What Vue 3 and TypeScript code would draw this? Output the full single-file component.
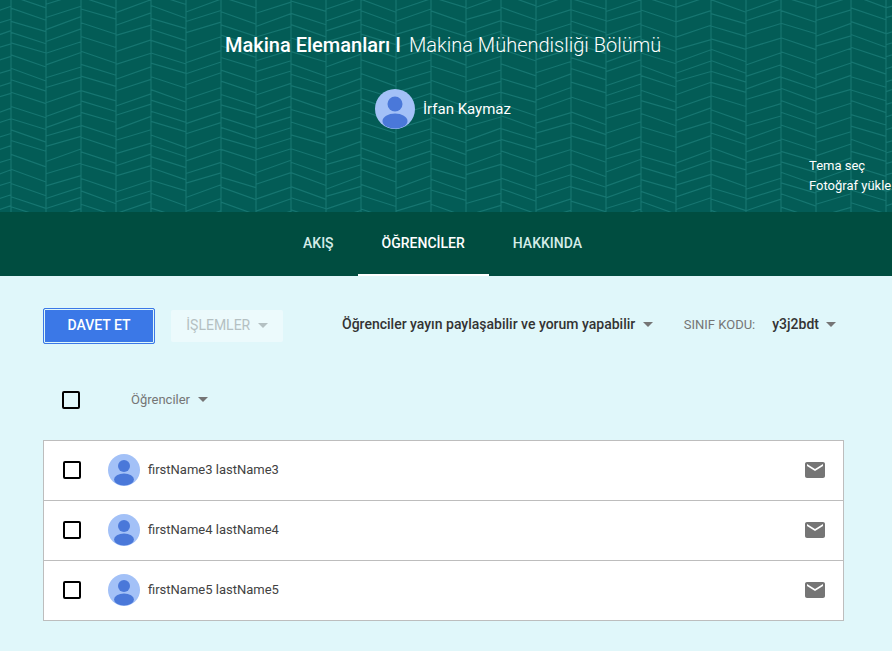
<script setup lang="ts">
interface Student {
  id: number;
  name: string;
}

const students: Student[] = [
  { id: 3, name: 'firstName3 lastName3' },
  { id: 4, name: 'firstName4 lastName4' },
  { id: 5, name: 'firstName5 lastName5' }
];

const tabs = ['AKIŞ', 'ÖĞRENCİLER', 'HAKKINDA'];

// herringbone background, small pseudo random jitter so it looks hand drawn
const makePattern = (): string => {
  let seed = 7;
  const rnd = (): number => {
    seed = (seed * 9301 + 49297) % 233280;
    return seed / 233280;
  };
  let d = '';
  const colW = 35;
  for (let c = -1; c < 26; c++) {
    const x = 11 + c * colW;
    d += `M${x} 0V212`;
    const down = Math.abs(c) % 2 !== 1;
    for (let y = -24 - rnd() * 6; y < 224; y += 10 + rnd() * 5) {
      const rise = 10 + rnd() * 3;
      if (down) d += `M${x} ${y.toFixed(1)}L${x + colW} ${(y + rise).toFixed(1)}`;
      else d += `M${x} ${(y + rise).toFixed(1)}L${x + colW} ${y.toFixed(1)}`;
    }
  }
  return d;
};

const patternPath = makePattern();
</script>

<template>
  <div class="page">
    <header class="banner">
      <svg class="banner-bg" width="892" height="212" viewBox="0 0 892 212">
        <path :d="patternPath" fill="none" stroke="#167570" stroke-width="1.2" />
      </svg>
      <h1 class="title">
        <span class="title-name">Makina Elemanları I</span>
        <span class="title-section">Makina Mühendisliği Bölümü</span>
      </h1>
      <div class="teacher">
        <svg class="avatar-lg" viewBox="0 0 40 40">
          <circle cx="20" cy="20" r="20" fill="#a3c1f7" />
          <circle cx="20" cy="15" r="7.5" fill="#4a78d9" />
          <ellipse cx="20" cy="32" rx="12.5" ry="7.5" fill="#4a78d9" />
        </svg>
        <span class="teacher-name">İrfan Kaymaz</span>
      </div>
      <div class="banner-links">
        <a>Tema seç</a>
        <a>Fotoğraf yükle</a>
      </div>
    </header>

    <nav class="tabs">
      <a v-for="tab in tabs" :key="tab" class="tab" :class="{ active: tab === 'ÖĞRENCİLER' }">{{ tab }}</a>
    </nav>

    <main class="content">
      <div class="toolbar">
        <button class="invite">DAVET ET</button>
        <button class="actions">İŞLEMLER <i class="caret caret-light"></i></button>
        <span class="permission">Öğrenciler yayın paylaşabilir ve yorum yapabilir <i class="caret"></i></span>
        <span class="code-label">SINIF KODU:</span>
        <span class="code">y3j2bdt <i class="caret"></i></span>
      </div>

      <div class="list-head">
        <span class="check"></span>
        <span class="sort">Öğrenciler <i class="caret"></i></span>
      </div>

      <ul class="students">
        <li v-for="student in students" :key="student.id" class="student">
          <span class="check"></span>
          <svg class="avatar" viewBox="0 0 32 32">
            <circle cx="16" cy="16" r="16" fill="#a3c1f7" />
            <circle cx="16" cy="12" r="6" fill="#4a78d9" />
            <ellipse cx="16" cy="25.5" rx="10" ry="6" fill="#4a78d9" />
          </svg>
          <span class="student-name">{{ student.name }}</span>
          <svg class="mail" width="24" height="24" viewBox="0 0 24 24">
            <path fill="#757575" d="M20 4H4c-1.1 0-2 .9-2 2v12c0 1.1.9 2 2 2h16c1.1 0 2-.9 2-2V6c0-1.1-.9-2-2-2zm0 4l-8 5-8-5V6l8 5 8-5v2z" />
          </svg>
        </li>
      </ul>
    </main>
  </div>
</template>

<style>
html, body {
  margin: 0;
  overflow: hidden;
}
</style>

<style scoped>
.page {
  width: 892px;
  height: 651px;
  overflow: hidden;
  font-family: Roboto, "Liberation Sans", sans-serif;
  background: #e0f7fa;
}

.banner {
  position: relative;
  height: 212px;
  box-sizing: border-box;
  padding-top: 32px;
  background: #035c56;
  color: #fff;
  overflow: hidden;
}

.banner-bg {
  position: absolute;
  left: 0;
  top: 0;
}

.title {
  position: relative;
  margin: 0 0 0 225px;
  font-size: 20px;
  line-height: 26px;
  font-weight: 400;
  white-space: nowrap;
  display: flex;
  gap: 8px;
}

.title-name {
  font-weight: 500;
}

.title-section {
  font-weight: 300;
}

.teacher {
  position: relative;
  display: flex;
  align-items: center;
  gap: 8px;
  margin: 31px 0 0 375px;
}

.avatar-lg {
  width: 40px;
  height: 40px;
}

.teacher-name {
  font-size: 15px;
  font-weight: 400;
}

.banner-links {
  position: relative;
  display: flex;
  flex-direction: column;
  margin: 27px 0 0 809px;
  font-size: 13px;
  line-height: 20px;
  white-space: nowrap;
}

.tabs {
  height: 64px;
  display: flex;
  padding-left: 279px;
  background: #004d40;
}

.tab {
  padding: 0 24px;
  line-height: 62px;
  font-size: 14px;
  font-weight: 500;
  color: #d4ece8;
  border-bottom: 2px solid transparent;
}

.tab.active {
  color: #fff;
  border-bottom-color: #fff;
}

.content {
  padding: 32px 48px 0 43px;
}

.toolbar {
  display: flex;
  align-items: center;
  height: 36px;
}

button {
  font-family: inherit;
  font-size: 14px;
  font-weight: 500;
  border-radius: 2px;
  padding: 0 0 2px;
}

.invite {
  width: 112px;
  height: 36px;
  color: #fff;
  background: #3b78e7;
  border: 1px solid #3b78e7;
  box-shadow: inset 0 0 0 1px #e0f7fa;
}

.actions {
  width: 112px;
  height: 32px;
  margin-left: 16px;
  border: 0;
  color: #b4c0c2;
  background: #ecfafc;
  font-weight: 400;
}

.permission {
  margin: 0 0 4px 59px;
  font-size: 14px;
  font-weight: 500;
  color: #333;
  white-space: nowrap;
}

.code-label {
  margin: 0 0 4px 31px;
  font-size: 13px;
  color: #757575;
  white-space: nowrap;
}

.code {
  margin: 0 0 4px 17px;
  font-size: 14px;
  font-weight: 500;
  color: #333;
  white-space: nowrap;
}

.caret {
  display: inline-block;
  width: 0;
  height: 0;
  margin-left: 4px;
  vertical-align: 2px;
  border-left: 5px solid transparent;
  border-right: 5px solid transparent;
  border-top: 5px solid #757575;
}

.caret-light {
  border-top-color: #b4c0c2;
}

.check {
  display: block;
  flex: none;
  width: 14px;
  height: 14px;
  border: 2px solid #000;
  border-radius: 2px;
}

.list-head {
  display: flex;
  align-items: center;
  height: 36px;
  margin-top: 38px;
  padding-left: 19px;
}

.sort {
  margin: 0 0 2px 51px;
  font-size: 13px;
  color: #757575;
}

.sort .caret {
  margin-left: 5px;
}

.students {
  list-style: none;
  margin: 22px 0 0;
  padding: 0;
  width: 801px;
  box-sizing: border-box;
  background: #fff;
  border: 1px solid #bdbdbd;
  border-bottom: 0;
}

.student {
  display: flex;
  align-items: center;
  height: 60px;
  box-sizing: border-box;
  padding: 0 16px 1px 19px;
  border-bottom: 1px solid #bdbdbd;
}

.avatar {
  width: 32px;
  height: 32px;
  margin-left: 27px;
}

.student-name {
  flex: 1;
  margin: 0 0 2px 8px;
  font-size: 13px;
  color: #424242;
}
</style>
